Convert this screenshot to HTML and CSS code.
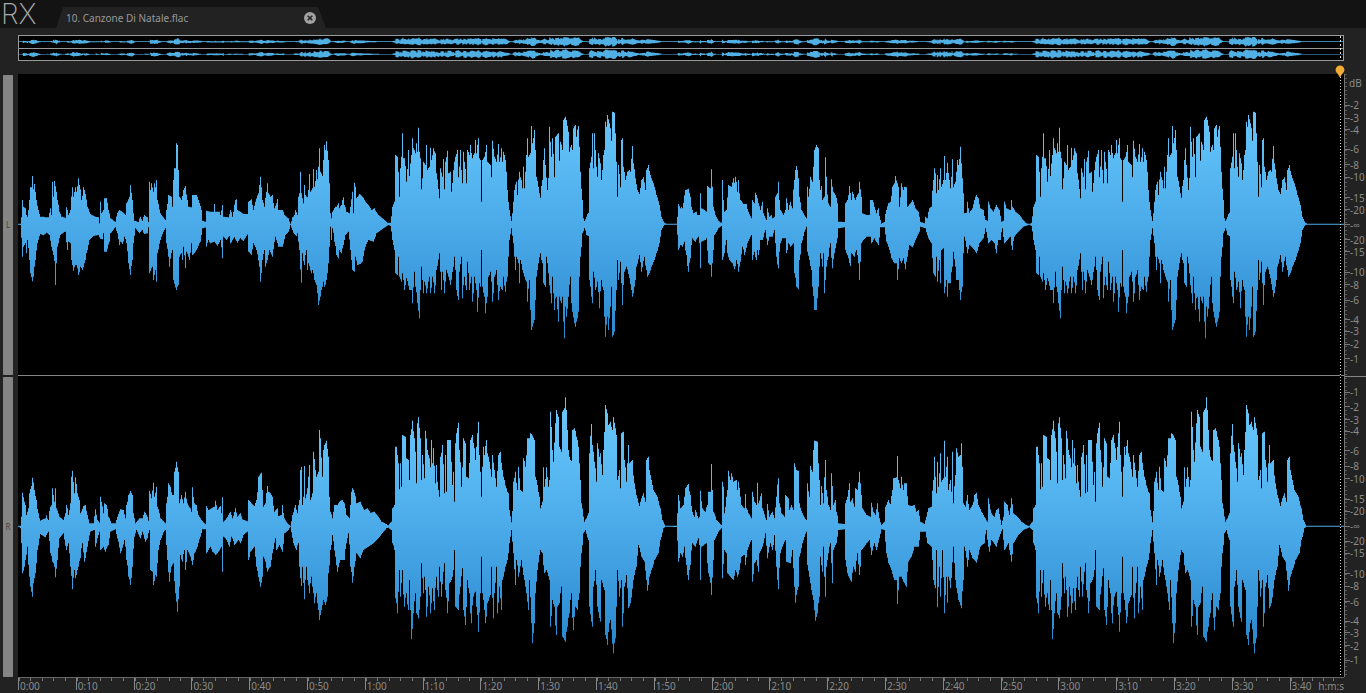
FILE: index.html
```html
<!DOCTYPE html>
<html lang="en">
<head>
<meta charset="utf-8">
<title>RX - 10. Canzone Di Natale.flac</title>
<link rel="stylesheet" href="styles.css">
</head>
<body>
<header class="topbar">
  <div class="logo">RX</div>
  <div class="tab">
    <span class="tab-title">10. Canzone Di Natale.flac</span>
    <button class="tab-close" type="button" aria-label="Close file">
      <svg viewBox="0 0 12 12" width="12" height="12"><circle cx="6" cy="6" r="6" fill="#a2a2a2"/><path d="M3.7 3.7l4.6 4.6M8.3 3.7l-4.6 4.6" stroke="#252525" stroke-width="1.6"/></svg>
    </button>
  </div>
</header>
<main class="editor">
  <section class="overview" aria-label="Overview">
    <svg class="overview-lane" data-channel="L" viewBox="0 0 3978 36" preserveAspectRatio="none"><path fill="#50afe3"/></svg>
    <svg class="overview-lane" data-channel="R" viewBox="0 0 3978 36" preserveAspectRatio="none"><path fill="#50afe3"/></svg>
    <div class="overview-playhead"></div>
  </section>
  <div class="workspace">
    <div class="channels">
      <div class="channel-bar">L</div>
      <div class="channel-bar">R</div>
    </div>
    <div class="lanes">
      <svg class="lane" data-channel="L" viewBox="0 0 3978 903" preserveAspectRatio="none">
        <defs><linearGradient id="wave" gradientUnits="userSpaceOnUse" x1="0" y1="110" x2="0" y2="800"><stop offset="0" stop-color="#66c6fa"/><stop offset=".48" stop-color="#4cacea"/><stop offset="1" stop-color="#2989cf"/></linearGradient></defs>
        <path fill="url(#wave)"/>
      </svg>
      <svg class="lane" data-channel="R" viewBox="0 0 3978 903" preserveAspectRatio="none"><path fill="url(#wave)"/></svg>
      <div class="playhead">
        <svg class="playhead-pin" viewBox="0 0 10 12" width="10" height="12"><path d="M5 .5a4.4 4.4 0 0 1 4.4 4.4C9.400 7.600 6.500 8.500 5.500 12h-1C3.500 8.500.6 7.600.6 4.900A4.400 4.400 0 0 1 5 .5z" fill="#f0ac34"/></svg>
      </div>
    </div>
    <div class="levels"><span class="level-unit">dB</span></div>
  </div>
  <div class="timeline"><span class="time-unit">h:m:s</span></div>
</main>
<script src="wave.js"></script>
</body>
</html>
```

FILE: styles.css
```css
* { box-sizing: border-box; }

body {
  margin: 0;
  min-height: 100vh;
  display: flex;
  flex-direction: column;
  background: #222;
  color: #8b8b8b;
  font: 10px/12px "Noto Sans", "Open Sans", sans-serif;
  overflow: hidden;
}

.topbar {
  display: flex;
  align-items: flex-end;
  height: 28px;
  background: #131313;
}

.logo {
  width: 56px;
  padding-left: 1px;
  color: #aaa;
  font: 200 28px/28px Inter, sans-serif;
}

.tab {
  display: flex;
  align-items: center;
  justify-content: space-between;
  width: 270px;
  height: 21px;
  padding: 0 10px;
  background: #222;
  clip-path: polygon(7px 0, 262px 0, 100% 100%, 0 100%);
}

.tab-title { color: #999; }

.tab-close {
  display: flex;
  padding: 0;
  border: 0;
  background: none;
}

.editor {
  flex: 1;
  display: flex;
  flex-direction: column;
  padding-top: 7px;
}

.overview {
  position: relative;
  display: flex;
  flex-direction: column;
  height: 26px;
  margin: 0 22px 13px 18px;
  border: 1px solid #999;
  background: #000;
}

.overview-lane {
  display: block;
  width: 100%;
  height: 12px;
}

.overview-lane + .overview-lane { border-top: 1px solid #999; }

.overview-playhead {
  position: absolute;
  top: 0;
  bottom: 0;
  right: 2px;
  width: 1px;
  background: repeating-linear-gradient(#ddd 0 2px, #000 2px 4px);
}

.workspace {
  flex: 1;
  display: flex;
}

.channels {
  width: 18px;
  padding: 1px 5px 0 3px;
  display: flex;
  flex-direction: column;
  gap: 2px;
}

.channel-bar {
  flex: 1;
  display: flex;
  align-items: center;
  justify-content: center;
  border-radius: 1px;
  background: #858585;
  color: #444;
  font-size: 8px;
}

.lanes {
  position: relative;
  flex: 1;
  display: flex;
  flex-direction: column;
  background: #000;
}

.lane {
  display: block;
  width: 100%;
  flex: 1 1 0;
  min-height: 0;
}

.lane + .lane { border-top: 1px solid #858585; }

.playhead {
  position: absolute;
  top: 0;
  bottom: 0;
  right: 3px;
  width: 1px;
  background: repeating-linear-gradient(#ddd 0 1px, #000 1px 3px);
}

.playhead-pin {
  position: absolute;
  top: -9px;
  left: -5px;
}

.levels {
  position: relative;
  width: 22px;
  border-left: 1px solid #777;
  background: repeating-linear-gradient(#555 0 1px, transparent 1px 4px) 0 0 / 2px 100% no-repeat;
}

.levels::after {
  content: "";
  position: absolute;
  top: 50%;
  left: 0;
  right: 0;
  border-top: 1px solid #858585;
}

.level-unit {
  position: absolute;
  top: 3px;
  left: 4px;
}

.level {
  position: absolute;
  left: 0;
  display: flex;
  align-items: center;
  height: 12px;
  margin-top: -6px;
}

.level::before {
  content: "";
  width: 5px;
  height: 1px;
  background: #777;
}

.timeline {
  position: relative;
  display: flex;
  height: 16px;
  margin: 0 22px 0 18px;
  border-top: 1px solid #666;
}

.decade {
  flex: 10 0 0;
  height: 12px;
  padding: 2px 0 0 1px;
  border-left: 1px solid #888;
  background: repeating-linear-gradient(to right, #777 0 1px, transparent 1px 20%) 0 0 / 100% 3px no-repeat;
}

.decade-last { flex-grow: 9.400; }

.time-unit {
  position: absolute;
  top: 2px;
  right: 0;
}
```

FILE: wave.js
```javascript
// Envelope segments: start offset, axis level, then "x,y" pairs above and below the axis.
const SEGMENTS = {
  L: [
    { start: -24, axis: 373,
      up: '24,373 32,373 34,352 37,300 41,320 45,325 48,345 53,350 58,300 61,262 65,262 67,228 70,268 74,252 78,300 85,330 90,350 100,350 108,352 116,352 120,325 124,345 127,245 130,290 134,243 138,275 143,300 148,335 155,350 165,353 170,322 176,345 181,330 186,262 190,290 196,262 200,275 205,235 210,268 215,300 221,262 226,282 233,320 240,342 255,350 266,352 268,370 271,305 275,340 279,330 283,295 290,294 295,330 302,355 315,365 322,338 328,330 340,338 346,345 350,310 358,290 362,256 366,300 370,340 374,362 384,366 390,350 396,362 402,345 412,352 416,366 418,245 422,270 425,250 429,275 434,250 437,262 439,240 443,300 450,340 466,360 470,330 475,285 484,290 488,320 490,240 494,205 498,205 499,130 501,135 502,205 506,210 507,290 515,300 520,270 526,258 531,300 536,320 543,322 546,285 560,285 565,300 575,330 577,362 588,366 589,332 600,335 612,335 614,312 617,335 628,335 632,345 636,318 638,315 640,350 655,352 662,330 668,350 675,300 678,298 682,330 690,335 700,342 714,342 716,305 724,298 730,330 736,305 744,280 748,255 751,230 755,262 758,300 763,320 768,275 772,250 776,280 782,290 787,285 792,325 800,310 802,297 806,330 818,330 824,345 834,355 841,372 848,352 853,345 857,330 862,345 866,290 869,280 871,215 875,280 879,310 882,255 886,285 891,292 896,270 899,222 902,275 907,265 911,208 914,260 920,210 924,265 926,200 929,145 932,215 937,228 940,180 944,135 947,150 950,124 954,180 957,250 959,310',
      down: '24,373 32,375 37,470 41,440 45,430 48,460 53,420 58,480 62,520 66,544 70,530 75,480 82,430 90,402 100,406 110,398 118,405 124,440 130,465 135,495 137,555 139,490 143,440 150,405 165,395 172,450 176,425 181,430 184,480 190,512 195,495 200,495 206,525 212,500 217,510 224,490 230,460 238,420 250,408 265,405 270,416 276,418 280,400 284,455 290,455 297,425 302,400 315,382 322,400 328,435 332,425 338,432 344,410 350,430 355,490 361,525 366,480 370,430 376,385 388,400 396,390 402,402 412,400 416,382 419,520 424,505 428,500 430,540 436,510 439,545 443,460 450,420 460,395 466,385 470,430 475,470 478,500 483,460 486,450 490,540 498,570 504,555 507,470 513,460 516,480 521,440 526,505 530,455 538,480 545,430 548,465 560,450 570,425 578,385 588,382 589,440 594,420 600,430 612,425 622,437 632,420 637,475 640,410 650,420 657,408 662,430 672,412 682,428 690,415 700,423 714,400 716,455 724,465 730,430 740,450 748,500 752,545 757,480 762,450 766,500 772,480 778,450 787,470 795,410 806,440 818,440 826,405 836,395 841,375 850,398 858,408 862,400 868,450 873,548 876,460 882,495 888,450 892,510 896,490 903,520 908,510 914,540 918,555 922,580 926,615 930,590 936,560 940,545 944,560 950,540 955,490 959,440' },
    { start: 936, axis: 403,
      up: '0,370 4,385 8,365 15,350 20,350 24,340 28,355 33,345 39,322 44,345 50,365 58,370 62,350 66,305 69,370 72,278 75,290 79,325 88,312 98,320 108,338 115,345 125,360 132,355 145,375 160,387 172,398 182,398 187,350 193,335 196,195 202,200 204,245 208,320 211,235 215,200 217,130 219,205 224,205 230,275 235,180 238,258 243,195 247,145 251,175 256,190 260,160 262,185 264,113 267,185 271,205 275,298 280,215 286,225 289,165 292,240 297,230 300,282 302,173 305,210 310,175 315,190 320,250 328,325 332,235 336,260 339,207 343,298 347,215 352,182 356,250 361,245 365,305 372,215 377,200 382,180 386,262 391,180 396,280 400,185 404,215 410,280 413,180 418,195 421,165 426,205 432,190 435,150 438,190 445,145 449,205 452,210 454,335 457,210 464,200 469,165 473,215 480,225 484,262 487,152 493,200 500,215 505,162 509,215 515,175 517,215 521,185 526,210 528,245 532,300 537,360 544,393 548,370 552,300 558,275 561,315 567,245 573,270 576,295 581,230 582,295 587,245 591,145 595,200 601,190 604,108 608,160 613,120 616,180 620,260 625,290 630,323 636,270 640,210 643,175 646,225 652,300 657,240 659,110 663,200 668,145 673,262 677,140 684,130 688,212 692,155 698,180 701,90 705,80 710,90 714,125 717,185 723,165 727,180 730,115 735,105 738,140 744,108 748,170 751,245 756,330 760,385 764,393 772,372 778,365 779,235 783,200 786,130 789,235 794,130 798,230 802,260 805,190 811,220 815,270 820,195 825,170 827,95 830,110 833,75 837,100 841,115 844,152 848,65 853,68 857,130 859,215 862,320 866,225 871,292 873,150 878,145 881,230 886,270 892,245 898,240 902,245 906,168 911,220 916,265 922,300 928,312 935,270 941,262 946,300 950,240 955,225 960,255 970,280 980,315 988,345 994,380 1002,398 1010,402',
      down: '0,410 4,450 8,415 14,455 20,495 24,505 28,480 33,490 40,465 46,435 55,425 62,480 66,540 72,545 76,500 82,525 90,522 97,515 105,470 115,450 130,455 140,430 160,415 174,405 182,408 187,450 193,480 196,550 202,555 205,500 209,560 213,575 218,550 223,600 230,565 238,600 244,600 248,640 252,545 257,590 263,640 267,685 270,600 275,530 279,610 284,575 290,610 297,560 302,610 308,560 314,610 320,540 328,490 334,600 338,545 343,610 349,540 355,560 362,585 369,530 374,500 379,600 384,630 389,545 393,500 397,625 402,560 408,600 413,515 418,600 424,560 428,635 434,560 438,600 443,665 447,580 452,590 454,480 457,590 462,620 466,670 471,620 476,560 482,545 488,635 494,560 500,540 504,630 510,590 516,600 520,560 525,605 531,560 534,500 538,450 544,415 550,460 556,540 560,500 565,520 569,580 572,510 577,540 583,560 588,575 592,635 597,570 601,660 604,720 608,710 612,690 616,630 619,560 625,520 630,490 636,520 641,580 645,590 650,500 655,550 660,610 664,640 668,560 672,660 676,625 680,620 684,695 688,620 693,640 697,620 702,745 706,650 710,680 715,620 720,560 725,640 728,665 732,700 736,710 741,685 746,665 749,560 752,500 757,430 764,415 770,435 778,440 779,570 786,640 791,545 797,600 803,575 808,655 813,570 819,600 826,740 831,680 836,720 840,650 844,590 848,740 854,725 858,600 862,510 866,570 871,515 877,645 882,545 890,530 898,565 904,600 908,620 914,590 920,530 928,495 935,545 942,500 948,540 952,560 958,550 965,530 972,510 980,490 988,460 994,420 1002,405 1010,404' },
    { start: 1956, axis: 373,
      up: '20,372 22,350 26,312 30,325 34,320 38,325 45,270 52,268 56,266 60,290 64,320 70,340 78,335 82,345 88,345 91,280 95,325 103,330 110,335 113,258 120,265 123,265 124,208 127,260 130,320 136,345 145,362 153,368 156,240 160,300 162,335 170,330 174,255 184,260 190,235 192,248 196,230 199,245 201,275 205,240 208,280 212,300 220,312 228,312 234,335 244,355 247,300 252,310 257,278 260,285 265,310 272,330 276,305 280,340 288,360 292,325 298,350 304,345 308,355 314,350 316,290 321,280 324,245 328,300 332,330 340,345 347,330 350,295 355,330 360,305 366,325 372,240 376,210 380,198 386,235 388,290 395,330 405,350 410,355 412,260 416,290 421,230 426,245 430,200 433,150 439,135 444,145 446,210 450,270 453,258 458,300 462,290 465,172 468,230 474,310 480,320 484,238 489,275 497,285 503,310 506,365 522,366 525,310 533,300 539,258 543,300 548,275 555,300 564,280 569,245 573,290 577,340 590,345 597,345 602,300 608,300 614,320 618,340 624,325 630,360 633,372 642,366 648,330 655,310 662,305 667,260 672,250 676,228 681,250 686,260 689,320 694,250 699,270 704,260 709,262 713,320 720,310 728,300 736,325 745,335 751,365 762,370 766,350 771,355 777,325 784,320 789,240 793,205 797,220 799,280 802,225 806,270 810,205 815,260 820,240 823,168 827,240 832,188 837,240 842,265 847,178 850,262 855,245 858,215 862,180 866,195 872,140 875,190 879,280 882,340 888,338 892,305 897,338 908,325 912,300 918,285 925,295 930,325 940,330 945,360 952,362 955,305 962,325 970,335 978,315 988,330 994,365 1000,362 1003,305 1010,325 1020,330 1024,300 1028,320 1036,335 1048,345 1058,358 1068,370 1078,372',
      down: '20,374 25,450 32,435 38,440 42,425 48,465 54,515 60,475 66,415 75,425 84,410 89,430 91,505 95,425 105,420 110,415 114,490 120,495 125,530 129,450 134,405 145,385 154,378 157,480 163,460 168,420 171,460 178,480 186,490 194,508 200,480 206,515 210,485 218,440 224,465 232,430 243,405 247,480 252,455 258,480 262,450 266,465 272,420 278,420 285,390 292,435 298,410 306,410 314,390 318,470 324,505 330,430 338,415 346,415 350,460 356,430 362,440 370,430 374,520 380,560 385,568 389,480 395,430 403,395 410,380 412,455 418,480 423,510 428,560 433,630 440,630 444,560 447,500 452,460 457,500 460,460 464,580 468,500 474,470 480,430 487,505 492,460 500,430 506,385 522,382 525,450 530,460 535,475 540,498 545,460 552,470 558,450 563,465 569,540 573,430 580,420 590,410 600,410 605,430 612,415 625,435 632,382 642,382 650,425 658,450 665,475 672,490 678,490 683,540 687,475 694,490 700,475 706,508 711,470 718,435 728,442 738,415 748,395 752,380 765,385 775,415 784,430 790,520 795,530 798,470 803,545 807,480 811,550 815,450 820,445 824,580 828,540 832,590 836,550 840,550 846,500 850,455 856,500 860,540 865,540 871,600 876,560 880,460 884,410 892,460 898,435 905,440 912,450 920,460 928,430 940,415 947,385 955,430 965,420 972,430 979,460 984,420 990,420 996,385 1003,430 1012,420 1020,410 1026,450 1032,410 1045,395 1060,380 1078,374' }
  ],
  R: [
    { start: -24, axis: 439,
      up: '24,439 30,439 33,410 38,338 42,365 46,375 50,405 54,385 58,340 63,318 68,293 73,330 78,360 84,400 90,422 105,415 108,406 114,420 120,380 127,372 128,325 132,365 136,325 140,385 148,410 160,420 166,400 170,375 176,405 181,370 184,290 188,272 192,340 197,292 202,340 208,360 212,400 220,378 225,375 232,405 238,430 250,430 256,388 262,420 270,430 271,350 275,365 280,400 284,370 290,375 296,410 304,430 316,430 322,410 330,388 340,390 346,415 350,375 356,345 361,333 367,345 370,400 376,430 388,415 396,415 404,395 412,410 417,430 419,332 424,355 430,308 434,350 439,320 443,380 452,415 466,430 470,370 476,310 480,320 486,345 490,345 494,275 499,245 502,262 506,275 508,370 514,345 520,370 526,335 531,370 540,385 545,395 547,322 552,370 558,375 565,405 574,420 585,432 588,378 596,390 604,385 612,380 616,362 622,390 630,378 635,400 637,352 640,425 650,415 660,395 668,415 676,385 682,410 690,400 698,418 714,425 716,360 724,370 732,378 740,360 746,290 753,278 757,330 760,380 766,370 771,318 776,335 781,340 787,350 792,395 802,385 806,408 814,405 817,375 822,415 832,430 841,438 848,405 855,375 862,400 867,360 870,270 874,260 877,375 881,350 883,258 887,355 892,325 898,255 902,360 907,340 911,215 916,270 920,290 924,275 927,200 929,150 932,175 936,290 939,210 943,195 950,182 954,230 957,350 962,395 967,415 973,375 982,375 990,362 996,360 1003,370 1010,405 1018,415 1024,335 1028,325 1034,338 1040,370 1050,365 1062,390 1072,385 1082,398 1092,395 1105,410 1115,425 1128,432',
      down: '24,439 32,445 38,580 43,560 47,540 52,500 57,590 62,620 66,650 70,610 76,580 83,510 90,462 105,472 115,455 122,520 128,545 134,560 137,592 141,540 148,475 160,460 168,510 175,490 182,560 187,628 192,570 197,595 204,560 210,535 216,490 224,545 232,500 240,455 252,450 257,500 264,465 270,450 272,510 280,500 285,515 294,495 302,455 316,448 324,485 332,520 344,480 350,540 356,590 362,615 367,560 372,470 380,450 390,475 398,455 405,485 412,475 417,450 420,570 427,575 431,615 436,585 440,590 444,510 452,480 462,452 467,450 471,540 478,605 483,560 490,550 495,640 500,665 503,695 507,620 510,525 516,545 522,510 527,570 532,510 541,530 547,555 554,520 562,500 570,470 578,448 587,448 590,520 600,500 608,515 617,525 626,515 634,500 637,575 641,470 650,480 657,500 665,470 674,495 685,480 692,490 700,465 712,455 716,540 722,515 732,500 740,560 747,605 752,620 757,590 761,530 766,545 771,575 780,560 788,520 795,475 800,510 808,495 817,515 824,460 835,450 841,440 850,490 858,510 864,490 868,560 873,618 877,560 883,658 888,560 893,600 898,640 903,590 908,620 913,670 918,640 923,670 928,720 934,690 940,660 947,675 952,650 956,580 962,510 968,465 975,530 982,575 990,540 1002,540 1008,490 1016,460 1022,560 1028,608 1033,560 1040,520 1050,535 1060,510 1075,500 1090,490 1105,475 1120,455 1130,445' },
    { start: 1086, axis: 439,
      up: '24,436 33,425 38,385 44,375 46,200 50,200 54,250 58,328 62,250 64,320 68,165 75,170 80,235 86,240 88,300 92,165 97,122 102,175 106,215 109,310 112,130 116,112 120,175 124,300 128,225 133,295 137,152 142,210 147,235 151,262 153,180 156,250 161,205 165,310 168,255 174,330 178,350 182,230 188,195 193,340 196,225 200,335 203,180 210,180 213,245 217,315 221,275 223,365 226,190 230,160 234,128 239,210 245,320 250,175 256,190 260,290 266,295 271,180 277,165 282,205 287,240 291,160 295,125 299,225 304,350 309,200 313,225 318,180 323,220 328,245 334,290 338,225 342,270 350,320 354,225 361,215 366,270 372,300 378,325 384,340 388,390 394,427 399,370 401,305 406,275 411,330 416,260 420,330 426,335 431,235 437,260 442,175 447,175 452,160 455,162 463,180 467,290 472,315 477,350 481,385 487,365 490,262 494,320 499,262 505,320 509,300 512,95 517,210 521,245 525,130 529,90 534,110 538,200 544,215 548,95 552,85 555,52 560,90 564,210 570,240 576,245 578,150 584,145 590,170 596,200 600,300 605,370 612,425 618,415 625,400 628,220 633,132 638,195 645,265 649,305 653,190 658,230 662,220 666,285 671,210 676,75 682,100 686,135 691,125 696,150 700,112 706,145 710,165 713,300 718,270 721,325 724,160 729,155 734,240 740,305 744,195 749,250 756,240 762,310 770,345 777,378 784,355 790,340 796,365 799,240 804,230 808,270 814,300 820,330 832,350 840,385 848,420 855,438',
      down: '24,443 33,450 38,490 44,510 47,655 53,700 57,570 62,650 66,570 72,680 78,640 84,690 88,600 91,690 95,778 100,700 105,640 110,700 116,715 121,650 125,550 129,640 134,590 140,710 146,620 152,700 157,625 162,690 168,590 174,650 178,560 184,650 192,550 197,630 203,700 208,610 215,600 221,570 223,510 227,680 234,690 240,620 247,565 250,690 257,735 262,600 267,640 273,730 279,650 285,635 290,680 296,755 300,640 304,530 308,640 313,690 317,730 323,670 330,645 334,560 339,715 344,640 349,560 353,700 358,620 364,690 368,600 376,560 383,540 388,490 394,450 400,520 406,615 410,540 416,590 424,540 432,600 440,640 444,690 449,600 454,730 458,790 462,730 466,640 472,570 480,510 487,520 492,580 500,570 508,600 512,740 517,660 522,680 528,765 532,680 538,670 543,620 548,770 555,785 561,740 567,700 573,640 579,750 586,680 592,690 597,640 600,560 605,520 610,460 616,450 624,480 628,680 636,740 641,620 647,570 652,680 660,725 665,600 672,630 677,765 682,795 687,730 692,720 699,820 705,775 709,680 713,570 718,650 724,600 728,740 734,620 740,585 745,685 752,670 760,600 768,560 776,495 784,530 793,545 799,600 803,632 808,590 815,570 824,540 834,520 842,480 850,445 856,440' },
    { start: 1956, axis: 439,
      up: '20,437 22,400 25,345 32,385 40,375 46,325 54,312 60,345 66,395 72,410 77,390 84,415 88,410 91,332 96,385 105,395 111,375 115,335 122,335 124,252 127,330 131,395 140,420 153,435 156,305 161,320 164,400 171,330 175,272 180,300 185,280 190,305 198,300 202,330 206,305 211,350 214,375 222,385 226,342 230,385 236,400 244,415 247,335 253,365 260,375 263,308 266,370 273,340 278,385 288,420 292,372 298,410 306,395 314,415 318,350 324,295 329,370 334,400 344,410 347,345 354,355 358,390 364,375 370,390 373,250 378,270 384,272 387,370 396,400 408,420 412,310 417,350 420,258 426,275 430,210 434,182 442,185 446,250 451,375 455,318 460,370 465,240 469,330 476,375 482,390 485,280 490,375 496,360 500,395 506,430 522,432 526,370 532,350 538,310 542,365 547,355 552,380 557,325 562,330 569,275 573,345 577,385 590,405 600,410 604,368 610,395 616,405 622,370 627,415 634,435 643,425 647,380 654,360 660,372 667,330 671,295 680,292 683,228 686,300 691,325 694,290 699,330 704,310 709,310 714,375 724,378 732,375 740,395 745,390 751,425 764,432 768,410 775,385 784,380 789,300 793,230 797,290 799,340 803,245 806,320 811,220 814,305 820,295 823,182 827,290 831,230 835,330 840,300 843,335 846,215 850,370 855,285 859,205 865,230 870,225 874,190 877,260 880,370 886,380 892,345 897,390 908,375 914,345 919,338 925,375 935,395 945,415 951,425 955,355 963,400 972,410 979,390 985,385 994,435 1000,410 1004,365 1011,375 1018,405 1025,355 1030,400 1042,410 1055,425 1068,435 1078,438',
      down: '20,441 25,545 32,520 38,530 43,500 48,555 54,600 60,555 66,490 76,500 84,475 89,495 91,600 95,500 108,490 114,580 119,590 125,645 129,540 134,480 145,455 154,445 157,595 163,510 169,520 173,580 180,590 190,600 197,570 203,590 209,570 213,530 222,525 226,555 232,510 243,480 248,605 253,550 260,540 264,575 268,520 278,500 286,460 292,535 300,490 308,510 314,465 318,560 325,628 330,520 337,500 345,480 349,545 360,550 368,510 372,620 376,668 381,630 386,620 389,530 397,490 408,455 412,555 418,590 424,630 430,660 436,722 442,700 447,650 450,530 457,575 460,500 465,650 469,560 478,500 482,490 486,610 490,510 498,490 506,450 522,448 526,540 532,580 537,595 544,605 549,560 556,575 561,520 569,585 575,510 590,490 598,480 604,525 612,490 620,510 628,475 634,448 643,450 649,520 656,550 664,570 672,600 679,600 683,672 687,590 694,590 702,610 709,620 714,545 724,530 734,500 745,500 752,455 766,455 772,490 785,500 790,600 795,625 798,510 803,682 807,560 812,650 817,510 824,700 828,590 832,668 836,590 842,625 850,500 856,600 861,640 866,660 874,685 879,600 884,500 893,560 898,510 908,535 920,548 930,500 942,490 948,450 957,515 965,480 978,500 988,470 996,448 1004,510 1014,490 1025,545 1030,490 1045,465 1060,450 1078,442' }
  ]
};

const WIDTH = 3978;
const STEP = 3;
// The second chorus repeats the first one.
const CHORUS = { from: 1116, to: 1944, shift: 1923 };

function envelope(channel, side) {
  const points = [];
  for (const segment of SEGMENTS[channel]) {
    for (const pair of segment[side].split(' ')) {
      const [x, y] = pair.split(',').map(Number);
      points.push([x + segment.start, Math.abs(y - segment.axis)]);
    }
  }
  const repeat = points
    .filter(([x]) => x >= CHORUS.from && x <= CHORUS.to)
    .map(([x, h]) => [x + CHORUS.shift, h]);
  return points.concat(repeat, [[3870, 1], [WIDTH, 1]]);
}

// One height per column: the tallest knot inside it, or the line between its neighbours.
function columns(points) {
  const out = [];
  let i = 0;
  for (let x = 0; x < WIDTH; x += STEP) {
    while (i < points.length - 2 && points[i + 1][0] < x) i++;
    const [x0, h0] = points[i];
    const [x1, h1] = points[i + 1];
    const t = Math.min(1, Math.max(0, (x + 1 - x0) / (x1 - x0 || 1)));
    let height = h0 + (h1 - h0) * t;
    if (x1 >= x && x1 < x + STEP) {
      height = h1;
      for (let k = i + 2; k < points.length && points[k][0] < x + STEP; k++) {
        height = Math.max(height, points[k][1]);
      }
    }
    out.push(Math.max(1.5, height));
  }
  return out;
}

function wavePath(channel, axis, scale) {
  const up = columns(envelope(channel, 'up'));
  const down = columns(envelope(channel, 'down'));
  let d = `M0 ${axis}`;
  up.forEach((h) => { d += `V${(axis - scale(h)).toFixed(1)}h${STEP}`; });
  for (let i = down.length - 1; i >= 0; i--) {
    d += `V${(axis + scale(down[i])).toFixed(1)}h-${STEP}`;
  }
  return d + 'Z';
}

document.querySelectorAll('.lane').forEach((lane) => {
  lane.querySelector('path').setAttribute('d', wavePath(lane.dataset.channel, 451, (h) => h));
});
document.querySelectorAll('.overview-lane').forEach((lane) => {
  lane.querySelector('path').setAttribute('d', wavePath(lane.dataset.channel, 17, (h) => Math.max(1, h * 0.042)));
});

// Decibel marks, as distance from the axis relative to half a lane.
const MARKS = [[-1, 0.890], [-2, 0.794], [-3, 0.708], [-4, 0.631], [-6, 0.501], [-8, 0.398], [-10, 0.316], [-15, 0.178], [-20, 0.100]];
const levels = document.querySelector('.levels');
function addLevel(text, position) {
  const mark = document.createElement('span');
  mark.className = 'level';
  mark.textContent = text;
  mark.style.top = `${(position * 100).toFixed(2)}%`;
  levels.append(mark);
}
[0.25, 0.75].forEach((axis, lane) => {
  addLevel('-∞', axis);
  MARKS.forEach(([db, level]) => {
    if (lane || db !== -1) addLevel(db, axis - level / 4);
    addLevel(db, axis + level / 4);
  });
});

const timeline = document.querySelector('.timeline');
for (let s = 0; s <= 220; s += 10) {
  const cell = document.createElement('span');
  cell.className = s === 220 ? 'decade decade-last' : 'decade';
  cell.textContent = `${Math.floor(s / 60)}:${String(s % 60).padStart(2, '0')}`;
  timeline.append(cell);
}
```
